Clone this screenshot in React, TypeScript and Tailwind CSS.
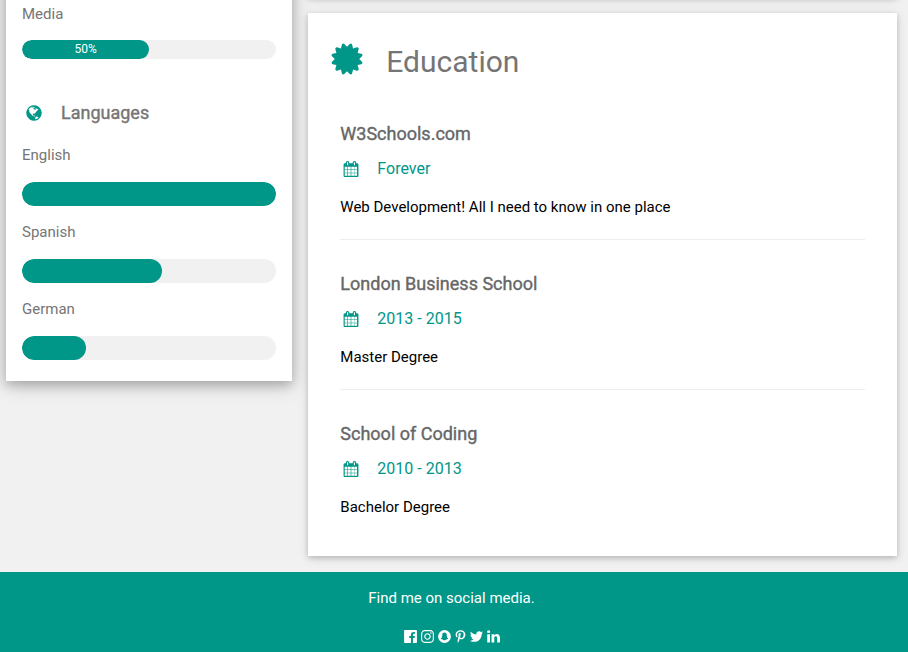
import type { ReactNode } from "react";
import { FaPinterestP } from "react-icons/fa";

const paths = {
  certificate:
    "M1504 896l138 135q30 28 20 70-12 41-52 51l-188 48 53 186q12 41-19 70-29 31-70 19l-186-53-48 188q-10 40-51 52-12 2-19 2-31 0-51-22l-135-138-135 138q-28 30-70 20-41-11-51-52l-48-188-186 53q-41 12-70-19-31-29-19-70l53-186-188-48q-40-10-52-51-10-42 20-70l138-135-138-135q-30-28-20-70 12-41 52-51l188-48-53-186q-12-41 19-70 29-31 70-19l186 53 48-188q10-41 51-51 41-12 70 19l135 139 135-139q29-30 70-19 41 10 51 51l48 188 186-53q41-12 70 19 31 29 19 70l-53 186 188 48q40 10 52 51 10 42-20 70z",
  calendar:
    "M192 1664h288v-288h-288v288zM544 1664h320v-288h-320v288zM192 1312h288v-320h-288v320zM544 1312h320v-320h-320v320zM192 928h288v-288h-288v288zM928 1664h320v-288h-320v288zM544 928h320v-288h-320v288zM1280 1664h288v-288h-288v288zM928 1312h320v-320h-320v320zM576 448v-288q0-13-9.5-22.5t-22.5-9.5h-64q-13 0-22.5 9.5t-9.5 22.5v288q0 13 9.5 22.5t22.5 9.5h64q13 0 22.5-9.5t9.5-22.5zM1280 1312h288v-320h-288v320zM928 928h320v-288h-320v288zM1280 928h288v-288h-288v288zM1344 448v-288q0-13-9.5-22.5t-22.5-9.5h-64q-13 0-22.5 9.5t-9.5 22.5v288q0 13 9.5 22.5t22.5 9.5h64q13 0 22.5-9.5t9.5-22.5zM1728 384v1280q0 52-38 90t-90 38h-1408q-52 0-90-38t-38-90v-1280q0-52 38-90t90-38h128v-96q0-66 47-113t113-47h64q66 0 113 47t47 113v96h384v-96q0-66 47-113t113-47h64q66 0 113 47t47 113v96h128q52 0 90 38t38 90z",
  globe:
    "M896 128q209 0 385.5 103t279.5 279.5 103 385.5-103 385.5-279.5 279.5-385.5 103-385.5-103-279.5-279.5-103-385.5 103-385.5 279.5-279.5 385.5-103zm274 521q-2 1-9.5 9.5t-13.5 9.5q2 0 4.5-5t5-11 3.5-7q6-7 22-15 14-6 52-12 34-8 51 11-2-2 9.5-13t14.5-12q3-2 15-4.5t15-7.5l2-22q-12 1-17.5-7t-6.5-21q0 2-6 8 0-7-4.5-8t-11.5 1-9 1q-10-3-15-7.5t-8-16.5-4-15q-2-5-9.5-11t-9.5-10q-1-2-2.5-5.5t-3-6.5-4-5.5-5.5-2.5-7 5-7.5 10-4.5 5q-3-2-6-1.5t-4.5 1-4.5 3-5 3.5q-3 2-8.5 3t-8.5 2q15-5-1-11-10-4-16-3 9-4 7.5-12t-8.5-14h5q-1-4-8.5-8.5t-17.5-8.5-13-6q-8-5-34-9.5t-33-.5q-5 6-4.5 10.5t4 14 3.5 12.5q1 6-5.5 13t-6.5 12q0 7 14 15.5t10 21.5q-3 8-16 16t-16 12q-5 8-1.5 18.5t10.5 16.5q2 2 1.5 4t-3.5 4.5-5.5 4-6.5 3.5l-3 2q-11 5-20.5-6t-13.5-26q-7-25-16-30-23-8-29 1-5-13-41-26-25-9-58-4 6-1 0-15-7-15-19-12 3-6 4-17.5t1-13.5q3-13 12-23 1-1 7-8.5t9.5-13.5.5-6q35 4 50-11 5-5 11.5-17t10.5-17q9-6 14-5.5t14.5 5.5 14.5 5q14 1 15.5-11t-7.5-20q12 1 3-17-4-7-8-9-12-4-27 5-8 4 2 8-1-1-9.5 10.5t-16.5 17.5-16-5q-1-1-5.5-13.5t-9.5-13.5q-8 0-16 15 3-8-11-15t-24-8q19-12-8-27-7-4-20.5-5t-19.5 4q-5 7-5.5 11.5t5 8 10.5 5.5 11.5 4 8.5 3q14 10 8 14-2 1-8.5 3.5t-11.5 4.5-6 4q-3 4 0 14t-2 14q-5-5-9-17.5t-7-16.5q7 9-25 6l-10-1q-4 0-16 2t-20.5 1-13.5-8q-4-8 0-20 1-4 4-2-4-3-11-9.5t-10-8.5q-46 15-94 41 6 1 12-1 5-2 13-6.5t10-5.5q34-14 42-7l5-5q14 16 20 25-7-4-30-1-20 6-22 12 7 12 5 18-4-3-11.5-10t-14.5-11-15-5q-16 0-22 1-146 80-235 222 7 7 12 8 4 1 5 9t2.5 11 11.5-3q9 8 3 19 1-1 44 27 19 17 21 21 3 11-10 18-1-2-9-9t-9-4q-3 5 .5 18.5t10.5 12.5q-7 0-9.5 16t-2.5 35.5-1 23.5l2 1q-3 12 5.5 34.5t21.5 19.5q-13 3 20 43 6 8 8 9 3 2 12 7.5t15 10 10 10.5q4 5 10 22.5t14 23.5q-2 6 9.5 20t10.5 23q-1 0-2.5 1t-2.5 1q3 7 15.5 14t15.5 13q1 3 2 10t3 11 8 2q2-20-24-62-15-25-17-29-3-5-5.5-15.5t-4.5-14.5q2 0 6 1.5t8.5 3.5 7.5 4 2 3q-3 7 2 17.5t12 18.5 17 19 12 13q6 6 14 19.5t0 13.5q9 0 20 10.5t17 19.5q5 8 8 26t5 24q2 7 8.5 13.5t12.5 9.5l16 8 13 7q5 2 18.5 10.5t21.5 11.5q10 4 16 4t14.5-2.5 13.5-3.5q15-2 29 15t21 21q36 19 55 11-2 1 .5 7.5t8 15.5 9 14.5 5.5 8.5q5 6 18 15t18 15q6-4 7-9-3 8 7 20t18 10q14-3 14-32-31 15-49-18 0-1-2.5-5.5t-4-8.5-2.5-8.5 0-7.5 5-3q9 0 10-3.5t-2-12.5-4-13q-1-8-11-20t-12-15q-5 9-16 8t-16-9q0 1-1.5 5.5t-1.5 6.5q-13 0-15-1 1-3 2.5-17.5t3.5-22.5q1-4 5.5-12t7.5-14.5 4-12.5-4.5-9.5-17.5-2.5q-19 1-26 20-1 3-3 10.5t-5 11.5-9 7q-7 3-24 2t-24-5q-13-8-22.5-29t-9.5-37q0-10 2.5-26.5t3-25-5.5-24.5q3-2 9-9.5t10-10.5q2-1 4.5-1.5t4.5 0 4-1.5 3-6q-1-1-4-3-3-3-4-3 7 3 28.5-1.5t27.5 1.5q15 11 22-2 0-1-2.5-9.5t-.5-13.5q5 27 29 9 3 3 15.5 5t17.5 5q3 2 7 5.5t5.5 4.5 5-.5 8.5-6.5q10 14 12 24 11 40 19 44 7 3 11 2t4.5-9.5 0-14-1.5-12.5l-1-8v-18l-1-8q-15-3-18.5-12t1.5-18.5 15-18.5q1-1 8-3.5t15.5-6.5 12.5-8q21-19 15-35 7 0 11-9-1 0-5-3t-7.5-5-4.5-2q9-5 2-16 5-3 7.5-11t7.5-10q9 12 21 2 8-8 1-16 5-7 20.5-10.5t18.5-9.5q7 2 8-2t1-12 3-12q4-5 15-9t13-5l17-11q3-4 0-4 18 2 31-11 10-11-6-20 3-6-3-9.5t-15-5.5q3-1 11.5-.5t10.5-1.5q15-10-7-16-17-5-43 12zm-163 877q206-36 351-189-3-3-12.5-4.5t-12.5-3.5q-18-7-24-8 1-7-2.5-13t-8-9-12.5-8-11-7q-2-2-7-6t-7-5.5-7.5-4.5-8.5-2-10 1l-3 1q-3 1-5.5 2.5t-5.5 3-4 3 0 2.5q-21-17-36-22-5-1-11-5.5t-10.5-7-10-1.5-11.5 7q-5 5-6 15t-2 13q-7-5 0-17.5t2-18.5q-3-6-10.5-4.5t-12 4.5-11.5 8.5-9 6.5-8.5 5.5-8.5 7.5q-3 4-6 12t-5 11q-2-4-11.5-6.5t-9.5-5.5q2 10 4 35t5 38q7 31-12 48-27 25-29 40-4 22 12 26 0 7-8 20.5t-7 21.5q0 6 2 16z",
  facebook:
    "M1579 128q35 0 60 25t25 60v1366q0 35-25 60t-60 25h-391v-595h199l30-232h-229v-148q0-56 23.5-84t91.5-28l122-1v-207q-63-9-178-9-136 0-217.5 80t-81.5 226v171h-200v232h200v595h-735q-35 0-60-25t-25-60v-1366q0-35 25-60t60-25h1366z",
  instagram:
    "M1152 896q0-106-75-181t-181-75-181 75-75 181 75 181 181 75 181-75 75-181zm138 0q0 164-115 279t-279 115-279-115-115-279 115-279 279-115 279 115 115 279zm108-410q0 38-27 65t-65 27-65-27-27-65 27-65 65-27 65 27 27 65zm-502-220q-7 0-76.5-.5t-105.5 0-96.5 3-103 10-71.5 18.5q-50 20-88 58t-58 88q-11 29-18.5 71.5t-10 103-3 96.5 0 105.5.5 76.5-.5 76.5 0 105.5 3 96.5 10 103 18.5 71.5q20 50 58 88t88 58q29 11 71.5 18.5t103 10 96.5 3 105.5 0 76.5-.5 76.5.5 105.5 0 96.5-3 103-10 71.5-18.5q50-20 88-58t58-88q11-29 18.5-71.5t10-103 3-96.5 0-105.5-.5-76.5.5-76.5 0-105.5-3-96.5-10-103-18.5-71.5q-20-50-58-88t-88-58q-29-11-71.5-18.5t-103-10-96.5-3-105.5 0-76.5.5zm768 630q0 229-5 317-10 208-124 322t-322 124q-88 5-317 5t-317-5q-208-10-322-124t-124-322q-5-88-5-317t5-317q10-208 124-322t322-124q88-5 317-5t317 5q208 10 322 124t124 322q5 88 5 317z",
  snapchat:
    "M896 128a768 768 0 1 1 0 1536a768 768 0 1 1 0-1536zM896 420c-160 0-262 110-262 268v110c-40 18-84 10-84 50c0 44 76 50 80 88c-24 90-96 160-186 190c0 60 90 60 116 80c12 24 6 50 36 54c40 0 80-12 120 12c56 40 100 80 180 80s124-40 180-80c40-24 80-12 120-12c30-4 24-30 36-54c26-20 116-20 116-80c-90-30-162-100-186-190c4-38 80-44 80-88c0-40-44-32-84-50v-110c0-158-102-268-262-268z",
  twitter:
    "M1684 408q-67 98-162 167 1 14 1 42 0 130-38 259.5t-115.5 248.5-184.5 210.5-258 146-323 54.5q-271 0-496-145 35 4 78 4 225 0 401-138-105-2-188-64.5t-114-159.5q33 5 61 5 43 0 85-11-112-23-185.5-111.5t-73.5-205.5v-4q68 38 146 41-66-44-105-115t-39-154q0-88 44-163 121 149 294.5 238.5t371.5 99.5q-8-38-8-74 0-134 94.5-228.5t228.5-94.5q140 0 236 102 109-21 205-78-37 115-142 178 93-10 186-50z",
  linkedin:
    "M477 625v991h-330v-991h330zm21-306q1 73-50.5 122t-135.5 49h-2q-82 0-132-49t-50-122q0-74 51.5-122.5t134.5-48.5 133 48.5 51 122.5zm1166 729v568h-329v-530q0-105-40.5-164.5t-126.5-59.5q-63 0-105.5 34.5t-63.5 85.5q-11 30-11 81v553h-329q2-399 2-647t-1-296l-1-48h329v144h-2q20-32 41-56t56.5-52 87-43.5 114.5-15.5q171 0 275 113.5t104 332.5z",
};

function Icon({ name, className }: { name: keyof typeof paths; className: string }) {
  return (
    <svg viewBox="0 0 1792 1792" fill="currentColor" fillRule="evenodd" className={className} aria-hidden="true">
      <path d={paths[name]} />
    </svg>
  );
}

function Meter({ label, value, caption }: { label: string; value: number; caption?: string }) {
  return (
    <div className={caption ? "space-y-[15px]" : "mb-[15px] space-y-4"}>
      <p className="leading-[22px]">{label}</p>
      <div
        role="progressbar"
        aria-label={label}
        aria-valuenow={value}
        className={`overflow-hidden rounded-full bg-[#f1f1f1] ${caption ? "h-[19px]" : "h-6"}`}
      >
        <div
          className="h-full rounded-full bg-[#009688] text-center text-xs leading-[19px] text-white"
          style={{ width: `${value}%` }}
        >
          {caption}
        </div>
      </div>
    </div>
  );
}

const schools = [
  { name: "W3Schools.com", dates: "Forever", text: "Web Development! All I need to know in one place" },
  { name: "London Business School", dates: "2013 - 2015", text: "Master Degree" },
  { name: "School of Coding", dates: "2010 - 2013", text: "Bachelor Degree" },
];

function SocialLink({ label, children }: { label: string; children: ReactNode }) {
  return (
    <a href="#" aria-label={label} className="flex hover:opacity-60">
      {children}
    </a>
  );
}

export default function App() {
  return (
    <div className="min-h-screen overflow-hidden bg-[#f1f1f1] font-[Roboto,sans-serif] text-[15px] text-black">
      <div className="-ml-0.5 mr-[3px] flex items-start">
        <div className="w-1/3 px-2">
          <aside className="-mt-40 bg-white px-4 pt-[163px] pb-[6px] text-[#757575] shadow-[0_4px_10px_0_rgba(0,0,0,0.2),0_4px_20px_0_rgba(0,0,0,0.19)]">
            <Meter label="Media" value={50} caption="50%" />
            <h2 className="mt-10 mb-[18px] flex items-center text-lg leading-[27px] [-webkit-text-stroke:thin]">
              <span className="mr-4 flex w-[23px] justify-center text-[#009688]">
                <Icon name="globe" className="size-[18px]" />
              </span>
              Languages
            </h2>
            <Meter label="English" value={100} />
            <Meter label="Spanish" value={55} />
            <Meter label="German" value={25} />
          </aside>
        </div>

        <main className="w-2/3 px-2">
          <div className="-mt-[163px] mb-4 h-40 bg-white shadow-[0_2px_5px_0_rgba(0,0,0,0.16),0_2px_10px_0_rgba(0,0,0,0.12)]" />
          <section className="mb-4 bg-white px-4 pt-[26px] pb-[38px] shadow-[0_2px_5px_0_rgba(0,0,0,0.16),0_2px_10px_0_rgba(0,0,0,0.12)]">
            <h2 className="mb-9 flex text-3xl leading-[45px] text-[#757575]">
              <span className="mr-4 flex w-[46px] items-start justify-center pt-0.5 text-[#009688]">
                <Icon name="certificate" className="size-9" />
              </span>
              Education
            </h2>
            {schools.map((school) => (
              <article
                key={school.name}
                className="mx-4 mb-[30px] border-b border-[#eee] pb-[21px] last:mb-0 last:border-0 last:pb-0"
              >
                <h3 className="text-lg leading-[27px] text-[#666] [-webkit-text-stroke:thin]">{school.name}</h3>
                <p className="mt-[10px] flex items-center text-base leading-6 text-[#009688]">
                  <span className="mr-4 flex w-[21px] justify-center">
                    <Icon name="calendar" className="size-4" />
                  </span>
                  {school.dates}
                </p>
                <p className="mt-[15px] leading-[22px]">{school.text}</p>
              </article>
            ))}
          </section>
        </main>
      </div>

      <footer className="relative bg-[#009688] pt-[15px] pr-[5px] pb-4 text-center text-white">
        <p className="mb-4 leading-[22px]">Find me on social media.</p>
        <div className="flex h-[22px] items-center justify-center gap-[2px]">
          <SocialLink label="Facebook"><Icon name="facebook" className="size-[15px]" /></SocialLink>
          <SocialLink label="Instagram"><Icon name="instagram" className="size-[15px]" /></SocialLink>
          <SocialLink label="Snapchat"><Icon name="snapchat" className="size-[15px]" /></SocialLink>
          <SocialLink label="Pinterest"><FaPinterestP className="size-[13px]" /></SocialLink>
          <SocialLink label="Twitter"><Icon name="twitter" className="size-[15px]" /></SocialLink>
          <SocialLink label="LinkedIn"><Icon name="linkedin" className="size-[15px]" /></SocialLink>
        </div>
      </footer>
    </div>
  );
}
